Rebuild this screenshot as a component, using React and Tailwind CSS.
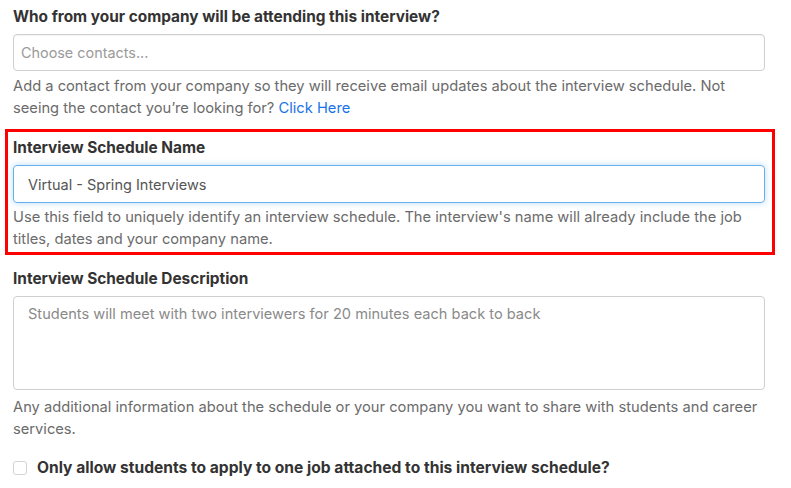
import React, { useState } from "react";

export default function App() {
    const [name, setName] = useState("Virtual - Spring Interviews");
    const [description, setDescription] = useState("");
    const [oneJob, setOneJob] = useState(false);

    return (
        <div className="min-h-screen bg-white px-[13px] pt-[7px] font-['Inter',sans-serif] text-[#333]">
            {/* Contacts */}
            <div>
                <label className="block text-[15.4px] font-bold leading-[20px] text-[#333]">
                    Who from your company will be attending this interview?
                </label>
                <input
                    type="text"
                    placeholder="Choose contacts..."
                    className="mt-[7px] block h-[37px] w-[752px] rounded-[4px] border border-[#cfcfcf] px-[7px] text-[14.4px] text-[#555] placeholder:text-[#9a9a9a] shadow-[inset_0_1px_1px_rgba(0,0,0,0.05)] outline-none"
                />
                <p className="mt-[5px] w-[752px] text-[14.7px] leading-[21.5px] text-[#6b6b6b]">
                    Add a contact from your company so they will receive email updates about the interview schedule. Not seeing the contact you’re looking for?{" "}
                    <a href="#" className="text-[#1a73e8]">Click Here</a>
                </p>
            </div>

            {/* Schedule name (highlighted) */}
            <div className="-ml-[8px] mt-[10px] w-[770px] border-[3px] border-[#ff0000] pb-[2px] pl-[5px] pt-[6px]">
                <label className="block text-[15.4px] font-bold leading-[20px] text-[#333]">
                    Interview Schedule Name
                </label>
                <input
                    type="text"
                    value={name}
                    onChange={(e) => setName(e.target.value)}
                    className="mt-[7px] block h-[38px] w-[752px] rounded-[4px] border border-[#66afe9] px-[14px] text-[14.5px] text-[#555] shadow-[0_0_6px_rgba(102,175,233,0.45)] outline-none"
                />
                <p className="mt-[3px] w-[752px] text-[14.7px] leading-[22px] text-[#6b6b6b]">
                    Use this field to uniquely identify an interview schedule. The interview's name will already include the job titles, dates and your company name.
                </p>
            </div>

            {/* Description */}
            <div className="mt-[14px]">
                <label className="block text-[15.4px] font-bold leading-[20px] text-[#333]">
                    Interview Schedule Description
                </label>
                <textarea
                    value={description}
                    onChange={(e) => setDescription(e.target.value)}
                    placeholder="Students will meet with two interviewers for 20 minutes each back to back"
                    className="mt-[7px] block h-[94px] w-[752px] resize-none rounded-[4px] border border-[#cfcfcf] px-[14px] py-[6px] text-[14.6px] leading-[22px] text-[#555] placeholder:text-[#8a8a8a] outline-none"
                />
                <p className="mt-[7px] w-[752px] text-[14.7px] leading-[21.5px] text-[#6b6b6b]">
                    Any additional information about the schedule or your company you want to share with students and career services.
                </p>
            </div>

            {/* Checkbox */}
            <label className="mt-[18px] flex items-center gap-[10px]">
                <input
                    type="checkbox"
                    checked={oneJob}
                    onChange={(e) => setOneJob(e.target.checked)}
                    className="h-[14px] w-[14px] appearance-none rounded-[3px] border border-[#d4d4d4] bg-white"
                />
                <span className="text-[15.6px] font-bold leading-[20px] text-[#333]">
                    Only allow students to apply to one job attached to this interview schedule?
                </span>
            </label>
        </div>
    );
}
